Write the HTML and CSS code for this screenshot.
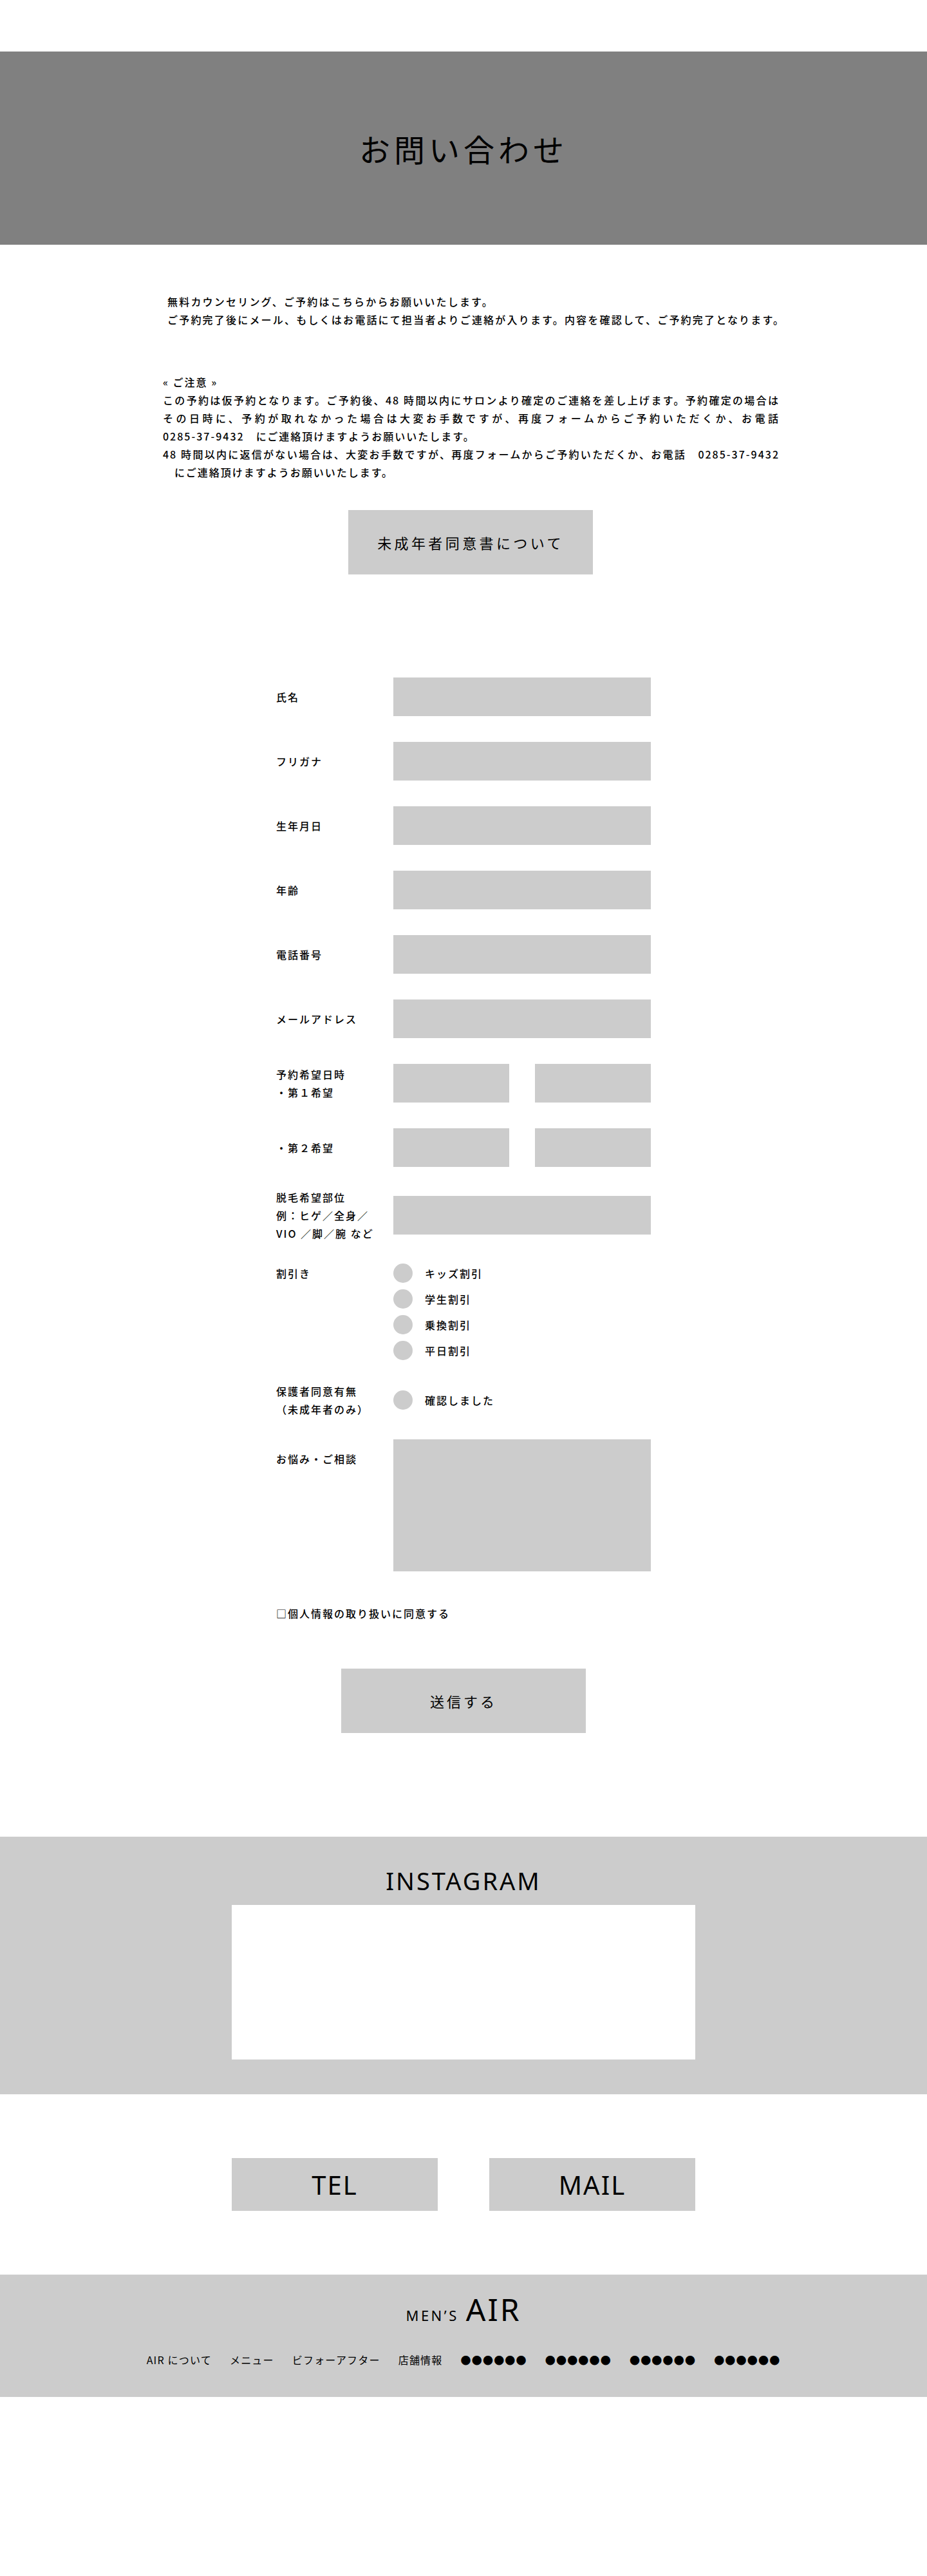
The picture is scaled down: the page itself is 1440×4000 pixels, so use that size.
FILE: index.html
```html
<!DOCTYPE html>
<html lang="ja">
<head>
<meta charset="utf-8">
<title>お問い合わせ | MEN'S AIR</title>
<link rel="stylesheet" href="styles.css">
</head>
<body>
<header class="site-top"></header>

<section class="hero">
  <h1 class="hero-title">お問い合わせ</h1>
</section>

<main class="content">
  <p class="intro">無料カウンセリング、ご予約はこちらからお願いいたします。<br>ご予約完了後にメール、もしくはお電話にて担当者よりご連絡が入ります。内容を確認して、ご予約完了となります。</p>

  <p class="notice">« ご注意 »<br>この予約は仮予約となります。ご予約後、48 時間以内にサロンより確定のご連絡を差し上げます。予約確定の場合はその日時に、予約が取れなかった場合は大変お手数ですが、再度フォームからご予約いただくか、お電話　<span class="nowrap">0285-37-9432</span>　にご連絡頂けますようお願いいたします。<br>48 時間以内に返信がない場合は、大変お手数ですが、再度フォームからご予約いただくか、お電話　<span class="nowrap">0285-37-9432</span><wbr><span class="nowrap">　にご連絡</span>頂けますようお願いいたします。</p>

  <a class="consent-link" href="#">未成年者同意書について</a>
</main>

<form class="form" action="#" onsubmit="return false;">
  <div class="row">
    <label class="label">氏名</label>
    <input class="input" type="text">
  </div>
  <div class="row">
    <label class="label">フリガナ</label>
    <input class="input" type="text">
  </div>
  <div class="row">
    <label class="label">生年月日</label>
    <input class="input" type="text">
  </div>
  <div class="row">
    <label class="label">年齢</label>
    <input class="input" type="text">
  </div>
  <div class="row">
    <label class="label">電話番号</label>
    <input class="input" type="text">
  </div>
  <div class="row">
    <label class="label">メールアドレス</label>
    <input class="input" type="text">
  </div>
  <div class="row">
    <label class="label">予約希望日時<br>・第１希望</label>
    <div class="pair">
      <input class="input input-half" type="text">
      <input class="input input-half" type="text">
    </div>
  </div>
  <div class="row">
    <label class="label">・第２希望</label>
    <div class="pair">
      <input class="input input-half" type="text">
      <input class="input input-half" type="text">
    </div>
  </div>
  <div class="row tight">
    <label class="label">脱毛希望部位<br>例：ヒゲ／全身／<br>VIO ／脚／腕 など</label>
    <input class="input" type="text">
  </div>
  <div class="row tight row-top">
    <span class="label label-radio">割引き</span>
    <div class="radios">
      <label class="radio"><span class="dot"></span>キッズ割引</label>
      <label class="radio"><span class="dot"></span>学生割引</label>
      <label class="radio"><span class="dot"></span>乗換割引</label>
      <label class="radio"><span class="dot"></span>平日割引</label>
    </div>
  </div>
  <div class="row tight-plus">
    <span class="label">保護者同意有無<br>（未成年者のみ）</span>
    <label class="radio"><span class="dot"></span>確認しました</label>
  </div>
  <div class="row tight row-top">
    <label class="label label-area">お悩み・ご相談</label>
    <textarea class="textarea"></textarea>
  </div>
  <p class="agree">□個人情報の取り扱いに同意する</p>
  <button class="submit" type="submit">送信する</button>
</form>

<section class="insta">
  <h2 class="insta-title">INSTAGRAM</h2>
  <div class="insta-feed"></div>
</section>

<nav class="contact">
  <a class="contact-btn" href="#">TEL</a>
  <a class="contact-btn" href="#">MAIL</a>
</nav>

<footer class="footer">
  <div class="logo"><span class="logo-sm">MEN’S</span>AIR</div>
  <ul class="footer-nav">
    <li>AIR について</li>
    <li>メニュー</li>
    <li>ビフォーアフター</li>
    <li>店舗情報</li>
    <li>●●●●●●</li>
    <li>●●●●●●</li>
    <li>●●●●●●</li>
    <li>●●●●●●</li>
  </ul>
</footer>
</body>
</html>
```

FILE: styles.css
```css
* {
  box-sizing: border-box;
}

body {
  margin: 0;
  background: #ffffff;
  color: #000000;
  font-family: "Noto Sans CJK JP", "Noto Sans", sans-serif;
}

.site-top {
  height: 80px;
}

.hero {
  height: 300px;
  background: #808080;
  display: flex;
  align-items: center;
  justify-content: center;
}

.hero-title {
  margin: 0;
  font-size: 48px;
  font-weight: 400;
  letter-spacing: 6px;
  line-height: 1;
}

.content {
  width: 1000px;
  margin: 0 auto;
  padding-left: 33px;
  font-size: 16px;
  font-weight: 500;
  letter-spacing: 2px;
  line-height: 28px;
}

.intro {
  margin: 74px 0 0;
  padding-left: 7px;
  letter-spacing: 2.2px;
}

.notice {
  margin: 69px 0 0;
  width: 958px;
  text-align: justify;
}

.nowrap {
  white-space: nowrap;
}

.consent-link {
  display: flex;
  align-items: center;
  justify-content: center;
  width: 380px;
  height: 100px;
  margin: 45px 0 0 288px;
  background: #cccccc;
  color: #000000;
  text-decoration: none;
  font-size: 22px;
  font-weight: 400;
  letter-spacing: 4.4px;
}

.form {
  width: 582px;
  margin: 160px auto 0;
  font-size: 16px;
  font-weight: 500;
  letter-spacing: 2px;
  line-height: 28px;
}

.row {
  display: flex;
  align-items: center;
}

.row + .row {
  margin-top: 40px;
}

.row + .row.tight {
  margin-top: 33px;
}

.row + .row.tight-plus {
  margin-top: 34px;
}

.row.row-top {
  align-items: flex-start;
}

.label {
  flex: none;
  width: 182px;
}

.label-radio {
  margin-top: 1px;
}

.label-area {
  padding-top: 16px;
}

.input {
  display: block;
  flex: none;
  width: 400px;
  height: 60px;
  margin: 0;
  padding: 0;
  border: 0;
  background: #cccccc;
}

.pair {
  display: flex;
  gap: 40px;
}

.input-half {
  width: 180px;
}

.radios {
  display: flex;
  flex-direction: column;
  gap: 10px;
}

.radio {
  display: flex;
  align-items: center;
  gap: 19px;
  height: 30px;
}

.dot {
  flex: none;
  width: 30px;
  height: 30px;
  border-radius: 50%;
  background: #cccccc;
}

.textarea {
  display: block;
  flex: none;
  width: 400px;
  height: 205px;
  margin: 0;
  padding: 0;
  border: 0;
  background: #cccccc;
  resize: none;
}

.agree {
  margin: 51px 0 0;
}

.submit {
  display: block;
  width: 380px;
  height: 100px;
  margin: 72px auto 0;
  padding: 0;
  border: 0;
  background: #cccccc;
  color: #000000;
  font-family: inherit;
  font-size: 22px;
  font-weight: 400;
  letter-spacing: 4px;
  cursor: pointer;
}

.insta {
  margin-top: 161px;
  padding: 43px 0 54px;
  background: #cccccc;
}

.insta-title {
  margin: 0;
  font-family: "Noto Sans", sans-serif;
  font-size: 38px;
  font-weight: 400;
  letter-spacing: 3px;
  line-height: 50px;
  text-align: center;
}

.insta-feed {
  width: 720px;
  height: 240px;
  margin: 13px auto 0;
  background: #ffffff;
}

.contact {
  display: flex;
  justify-content: center;
  gap: 80px;
  margin-top: 99px;
}

.contact-btn {
  display: flex;
  align-items: center;
  justify-content: center;
  width: 320px;
  height: 82px;
  background: #cccccc;
  color: #000000;
  text-decoration: none;
  font-family: "Noto Sans", sans-serif;
  font-size: 40px;
  letter-spacing: 2px;
}

.footer {
  height: 190px;
  margin-top: 99px;
  padding-top: 30px;
  background: #cccccc;
}

.logo {
  font-family: "Noto Sans", sans-serif;
  font-size: 48px;
  line-height: 48px;
  letter-spacing: 3px;
  text-align: center;
}

.logo-sm {
  font-size: 22px;
  line-height: 1;
  letter-spacing: 3.5px;
  margin-right: 11px;
}

.footer-nav {
  display: flex;
  justify-content: center;
  gap: 28px;
  margin: 40px 0 0;
  padding: 0;
  list-style: none;
  font-size: 16px;
  letter-spacing: 1.2px;
  line-height: 28px;
}
```
